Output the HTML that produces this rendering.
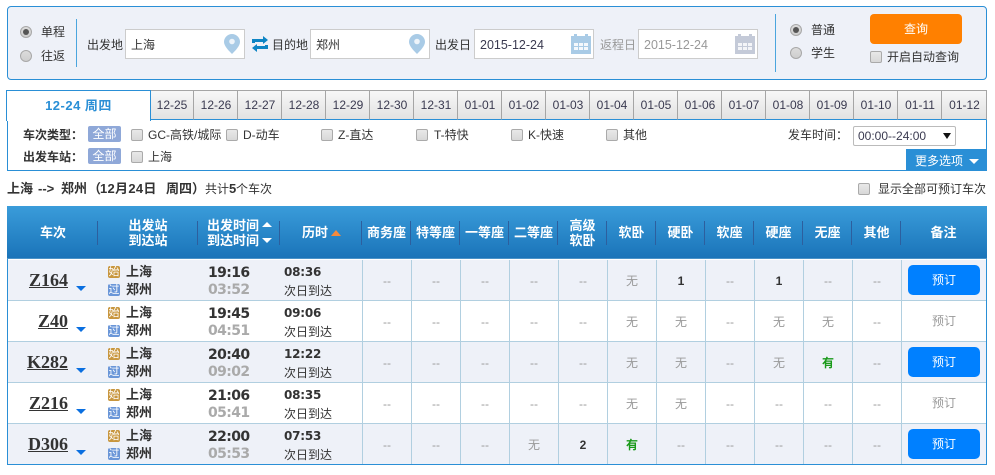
<!DOCTYPE html>
<html lang="zh"><head><meta charset="utf-8"><title>车票查询</title>
<style>
*{box-sizing:border-box}
html,body{margin:0;padding:0;background:#fff}
body{width:995px;height:475px;overflow:hidden;position:relative;font:12px/16px "Liberation Sans","WenQuanYi Zen Hei","Noto Sans CJK SC",sans-serif;color:#333}
.a{position:absolute;white-space:nowrap}
.rd{position:absolute;width:12px;height:12px;border-radius:50%;border:1px solid #a8a8a8;background:linear-gradient(#dcdcdc,#cecece)}
.rd.on:after{content:"";position:absolute;left:2px;top:2px;width:6px;height:6px;border-radius:50%;background:#555}
.cb{position:absolute;width:12px;height:12px;border-radius:2px;border:1px solid #aaa;background:linear-gradient(#e8e8e8,#d8d8d8)}
.inp{position:absolute;height:30px;width:120px;top:29px;background:#fff;border:1px solid #ccc;line-height:30px;padding-left:5px;font-size:12px}
.tab{position:absolute;top:90px;height:30px;width:44px;padding-left:1px;text-align:center;line-height:29px;background:linear-gradient(#f7f7f7,#e2e2e2);border-top:1px solid #a5a5a5;border-right:1px solid #a5a5a5;border-bottom:1px solid #2a8fd6;color:#3a3a50}
.bd{position:absolute;width:33px;height:16px;background:#8fa8d8;color:#fff;text-align:center;line-height:16px;border-radius:2px;left:88px;font-size:12px}
.th{position:absolute;top:206px;height:53px;color:#fff;font-weight:bold;text-align:center;line-height:15px;display:flex;align-items:center;justify-content:center;font-size:13px}
.sp{position:absolute;top:221px;width:1px;height:24px;background:#2d5f9e}
.row{position:absolute;left:8px;width:978px;height:41px;border-bottom:1px solid #b1cfe0}
.row.g{background:#eef1f8}
.no{position:absolute;right:918px;top:10px;font:bold 18px/20px "Liberation Serif",serif;text-decoration:underline;color:#333}
.ar{position:absolute;left:68px;top:26px;width:0;height:0;border:5px solid transparent;border-top:5px solid #0a6fe0;border-bottom:0}
.ic{position:absolute;left:100px;width:12px;height:12px;border-radius:2px;color:#fff;font-size:11px;line-height:12px;text-align:center}
.st{position:absolute;left:118px;font-weight:bold;font-size:13px;line-height:16px;color:#333}
.t1,.t2{position:absolute;left:200px;font:bold 14px/18px "DejaVu Sans","Liberation Sans",sans-serif;letter-spacing:-.6px}
.t1{top:4px;color:#333}.t2{top:21px;color:#aaa}
.d{position:absolute;left:276px;top:4px;font:bold 12px/16px "DejaVu Sans",sans-serif;letter-spacing:-.2px}
.n{position:absolute;left:276px;top:23px;font-size:12px;line-height:16px}
.c{position:absolute;top:0;width:49px;height:40px;border-left:1px solid #b1cfe0;text-align:center;line-height:42px;color:#999}
.c.b{color:#333;font-weight:bold}.c.y{color:#1a9a1a;font-weight:bold}
.btn{position:absolute;left:900px;top:5px;width:72px;height:30px;background:#0080ff;color:#fff;border-radius:5px;text-align:center;line-height:30px;font-size:12px}
.btn.off{background:none;color:#999}
.end{position:absolute;left:893px;top:0;height:40px;border-left:1px solid #b1cfe0}
</style></head><body>

<div class="a" style="left:7px;top:6px;width:980px;height:74px;background:#eef1f8;border:1px solid #2a8fd6;border-radius:4px"></div>
<span class="rd on" style="left:20px;top:26px"></span><span class="a" style="left:41px;top:24px">单程</span>
<span class="rd" style="left:20px;top:50px"></span><span class="a" style="left:41px;top:48px">往返</span>
<div class="a" style="left:76px;top:19px;width:1px;height:48px;background:#4aa5de"></div>
<span class="a" style="left:87px;top:37px">出发地</span>
<div class="inp" style="left:125px">上海</div>
<svg class="a" style="left:223px;top:34px" width="18" height="20" viewBox="0 0 18 20"><path d="M9 0a8 8 0 0 1 8 8c0 4-5 9-8 12C6 17 1 12 1 8a8 8 0 0 1 8-8z" fill="#a9cbe6"/><circle cx="9" cy="7.500" r="2.800" fill="#eef4fa"/></svg>
<svg class="a" style="left:252px;top:36px" width="16" height="16" viewBox="0 0 16 16"><path d="M0 7V3h11V0l5 4-5 4V6H3v1zM16 9v4H5v3l-5-4 5-4v2h8V9z" fill="#0d84c4"/></svg>
<span class="a" style="left:272px;top:37px">目的地</span>
<div class="inp" style="left:310px">郑州</div>
<svg class="a" style="left:408px;top:34px" width="18" height="20" viewBox="0 0 18 20"><path d="M9 0a8 8 0 0 1 8 8c0 4-5 9-8 12C6 17 1 12 1 8a8 8 0 0 1 8-8z" fill="#a9cbe6"/><circle cx="9" cy="7.500" r="2.800" fill="#eef4fa"/></svg>
<span class="a" style="left:435px;top:37px">出发日</span>
<div class="inp" style="left:474px;font-size:12.500px;color:#3a3a50">2015-12-24</div>
<svg class="a" style="left:571px;top:34px" width="20" height="20" viewBox="0 0 20 20"><path d="M0 2h3V0h3v2h8V0h3v2h3v18H0z" fill="#a9cbe6"/><path d="M3 9h4v3H3zM8 9h4v3H8zM13 9h4v3h-4zM3 13h4v3H3zM8 13h4v3H8zM13 13h4v3h-4z" fill="#f4f8fc"/></svg>
<span class="a" style="left:600px;top:37px;color:#999">返程日</span>
<div class="inp" style="left:638px;font-size:12.500px;color:#999">2015-12-24</div>
<svg class="a" style="left:735px;top:34px" width="20" height="20" viewBox="0 0 20 20"><path d="M0 2h3V0h3v2h8V0h3v2h3v18H0z" fill="#c4cad8"/><path d="M3 9h4v3H3zM8 9h4v3H8zM13 9h4v3h-4zM3 13h4v3H3zM8 13h4v3H8zM13 13h4v3h-4z" fill="#f4f5f8"/></svg>
<div class="a" style="left:775px;top:14px;width:1px;height:58px;background:#4aa5de"></div>
<span class="rd on" style="left:790px;top:24px"></span><span class="a" style="left:811px;top:22px">普通</span>
<span class="rd" style="left:790px;top:47px"></span><span class="a" style="left:811px;top:45px">学生</span>
<div class="a" style="left:870px;top:14px;width:92px;height:30px;background:#ff8000;border-radius:4px;color:#fff;text-align:center;line-height:30px">查询</div>
<span class="cb" style="left:870px;top:51px"></span><span class="a" style="left:887px;top:49px">开启自动查询</span>

<div class="a" style="left:6px;top:90px;width:145px;height:31px;background:#fff;border:1px solid #2a8fd6;border-bottom:0;text-align:center;line-height:29px;font-weight:bold;font-size:13px;letter-spacing:.5px;color:#2a8fd6;z-index:2">12-24 周四</div>
<div class="tab" style="left:150px">12-25</div><div class="tab" style="left:194px">12-26</div><div class="tab" style="left:238px">12-27</div><div class="tab" style="left:282px">12-28</div><div class="tab" style="left:326px">12-29</div><div class="tab" style="left:370px">12-30</div><div class="tab" style="left:414px">12-31</div><div class="tab" style="left:458px">01-01</div><div class="tab" style="left:502px">01-02</div><div class="tab" style="left:546px">01-03</div><div class="tab" style="left:590px">01-04</div><div class="tab" style="left:634px">01-05</div><div class="tab" style="left:678px">01-06</div><div class="tab" style="left:722px">01-07</div><div class="tab" style="left:766px">01-08</div><div class="tab" style="left:810px">01-09</div><div class="tab" style="left:854px">01-10</div><div class="tab" style="left:898px">01-11</div><div class="tab" style="left:942px;width:45px">01-12</div>

<div class="a" style="left:7px;top:120px;width:980px;height:51px;border:1px solid #2a8fd6;border-top:0"></div>
<span class="a" style="left:23px;top:127px;font-weight:bold">车次类型：</span><span class="bd" style="top:126px">全部</span>
<span class="cb" style="left:131px;top:129px"></span><span class="a" style="left:148px;top:127px">GC-高铁/城际</span>
<span class="cb" style="left:226px;top:129px"></span><span class="a" style="left:243px;top:127px">D-动车</span>
<span class="cb" style="left:321px;top:129px"></span><span class="a" style="left:338px;top:127px">Z-直达</span>
<span class="cb" style="left:416px;top:129px"></span><span class="a" style="left:434px;top:127px">T-特快</span>
<span class="cb" style="left:511px;top:129px"></span><span class="a" style="left:528px;top:127px">K-快速</span>
<span class="cb" style="left:606px;top:129px"></span><span class="a" style="left:623px;top:127px">其他</span>
<span class="a" style="left:788px;top:127px">发车时间：</span>
<div class="a" style="left:853px;top:126px;width:103px;height:20px;border:1px solid #bbb;border-radius:2px;line-height:18px;padding-left:4px;background:#fff;color:#3a3a50">00:00--24:00<span style="position:absolute;left:89px;top:6px;width:0;height:0;border:4px solid transparent;border-top:6px solid #111;border-bottom:0"></span></div>
<div class="a" style="left:906px;top:149px;width:81px;height:22px;background:#2a8fd6;color:#fff;line-height:25px;padding-left:9px">更多选项<span style="position:absolute;left:63px;top:10px;width:0;height:0;border:5px solid transparent;border-top:5px solid #fff;border-bottom:0"></span></div>
<span class="a" style="left:23px;top:149px;font-weight:bold">出发车站：</span><span class="bd" style="top:148px">全部</span>
<span class="cb" style="left:131px;top:151px"></span><span class="a" style="left:148px;top:149px">上海</span>

<b class="a" style="left:7px;top:181px;font-size:13px">上海</b><b class="a" style="left:38px;top:181px;font-size:13px">--&gt;</b><b class="a" style="left:61px;top:181px;font-size:13px">郑州</b><b class="a" style="left:88px;top:181px;font-size:13px">（</b><b class="a" style="left:100px;top:181px;font-size:13px;letter-spacing:.3px">12月24日</b><b class="a" style="left:166px;top:181px;font-size:13px">周四</b><b class="a" style="left:192px;top:181px;font-size:13px">）</b>
<span class="a" style="left:205px;top:181px">共计</span><b class="a" style="left:229px;top:181px;font-size:13px">5</b><span class="a" style="left:236px;top:181px">个车次</span>
<span class="cb" style="left:858px;top:183px"></span><span class="a" style="left:878px;top:181px">显示全部可预订车次</span>

<div class="a" style="left:7px;top:206px;width:980px;height:259px;border:1px solid #2a8fd6;border-top:0"></div>
<div class="a" style="left:7px;top:206px;width:980px;height:53px;background:linear-gradient(#3a9cda,#1a74b9);border-bottom:1px solid #4a93c8"></div>
<div class="th" style="left:8px;width:90px">车次</div>
<div class="th" style="left:98px;width:100px">出发站<br>到达站</div>
<div class="th" style="left:198px;width:70px">出发时间<br>到达时间</div>
<span class="a" style="left:262px;top:222px;border:5px solid transparent;border-bottom:5px solid #fff;border-top:0;width:0;height:0"></span>
<span class="a" style="left:262px;top:238px;border:5px solid transparent;border-top:5px solid #fff;border-bottom:0;width:0;height:0"></span>
<div class="th" style="left:290px;width:50px">历时</div>
<span class="a" style="left:331px;top:230px;border:5px solid transparent;border-bottom:6px solid #f58a3c;border-top:0;width:0;height:0"></span>
<div class="th" style="left:362px;width:49px">商务座</div><div class="th" style="left:411px;width:49px">特等座</div><div class="th" style="left:460px;width:49px">一等座</div><div class="th" style="left:509px;width:49px">二等座</div><div class="th" style="left:558px;width:49px">高级<br>软卧</div><div class="th" style="left:607px;width:49px">软卧</div><div class="th" style="left:656px;width:49px">硬卧</div><div class="th" style="left:705px;width:49px">软座</div><div class="th" style="left:754px;width:49px">硬座</div><div class="th" style="left:803px;width:49px">无座</div><div class="th" style="left:852px;width:49px">其他</div><div class="th" style="left:901px;width:85px">备注</div>
<i class="sp" style="left:97px"></i><i class="sp" style="left:197px"></i><i class="sp" style="left:279px"></i><i class="sp" style="left:361px"></i><i class="sp" style="left:410px"></i><i class="sp" style="left:459px"></i><i class="sp" style="left:508px"></i><i class="sp" style="left:557px"></i><i class="sp" style="left:606px"></i><i class="sp" style="left:655px"></i><i class="sp" style="left:704px"></i><i class="sp" style="left:753px"></i><i class="sp" style="left:802px"></i><i class="sp" style="left:851px"></i><i class="sp" style="left:900px"></i>

<div class="a row g" style="top:260px"><span class="no">Z164</span><i class="ar"></i><span class="ic" style="top:6px;background:#c8963e">始</span><span class="st" style="top:4px">上海</span><span class="ic" style="top:24px;background:#6a96d8">过</span><span class="st" style="top:22px">郑州</span><span class="t1">19:16</span><span class="t2">03:52</span><span class="d">08:36</span><span class="n">次日到达</span>
<span class="c" style="left:354px">--</span><span class="c" style="left:403px">--</span><span class="c" style="left:452px">--</span><span class="c" style="left:501px">--</span><span class="c" style="left:550px">--</span><span class="c" style="left:599px">无</span><span class="c b" style="left:648px">1</span><span class="c" style="left:697px">--</span><span class="c b" style="left:746px">1</span><span class="c" style="left:795px">--</span><span class="c" style="left:844px">--</span><i class="end"></i><span class="btn">预订</span></div>

<div class="a row" style="top:301px"><span class="no">Z40</span><i class="ar"></i><span class="ic" style="top:6px;background:#c8963e">始</span><span class="st" style="top:4px">上海</span><span class="ic" style="top:24px;background:#6a96d8">过</span><span class="st" style="top:22px">郑州</span><span class="t1">19:45</span><span class="t2">04:51</span><span class="d">09:06</span><span class="n">次日到达</span>
<span class="c" style="left:354px">--</span><span class="c" style="left:403px">--</span><span class="c" style="left:452px">--</span><span class="c" style="left:501px">--</span><span class="c" style="left:550px">--</span><span class="c" style="left:599px">无</span><span class="c" style="left:648px">无</span><span class="c" style="left:697px">--</span><span class="c" style="left:746px">无</span><span class="c" style="left:795px">无</span><span class="c" style="left:844px">--</span><i class="end"></i><span class="btn off">预订</span></div>

<div class="a row g" style="top:342px"><span class="no">K282</span><i class="ar"></i><span class="ic" style="top:6px;background:#c8963e">始</span><span class="st" style="top:4px">上海</span><span class="ic" style="top:24px;background:#6a96d8">过</span><span class="st" style="top:22px">郑州</span><span class="t1">20:40</span><span class="t2">09:02</span><span class="d">12:22</span><span class="n">次日到达</span>
<span class="c" style="left:354px">--</span><span class="c" style="left:403px">--</span><span class="c" style="left:452px">--</span><span class="c" style="left:501px">--</span><span class="c" style="left:550px">--</span><span class="c" style="left:599px">无</span><span class="c" style="left:648px">无</span><span class="c" style="left:697px">--</span><span class="c" style="left:746px">无</span><span class="c y" style="left:795px">有</span><span class="c" style="left:844px">--</span><i class="end"></i><span class="btn">预订</span></div>

<div class="a row" style="top:383px"><span class="no">Z216</span><i class="ar"></i><span class="ic" style="top:6px;background:#c8963e">始</span><span class="st" style="top:4px">上海</span><span class="ic" style="top:24px;background:#6a96d8">过</span><span class="st" style="top:22px">郑州</span><span class="t1">21:06</span><span class="t2">05:41</span><span class="d">08:35</span><span class="n">次日到达</span>
<span class="c" style="left:354px">--</span><span class="c" style="left:403px">--</span><span class="c" style="left:452px">--</span><span class="c" style="left:501px">--</span><span class="c" style="left:550px">--</span><span class="c" style="left:599px">无</span><span class="c" style="left:648px">无</span><span class="c" style="left:697px">--</span><span class="c" style="left:746px">--</span><span class="c" style="left:795px">--</span><span class="c" style="left:844px">--</span><i class="end"></i><span class="btn off">预订</span></div>

<div class="a row g" style="top:424px;border-bottom:1px solid #2a8fd6"><span class="no">D306</span><i class="ar"></i><span class="ic" style="top:6px;background:#c8963e">始</span><span class="st" style="top:4px">上海</span><span class="ic" style="top:24px;background:#6a96d8">过</span><span class="st" style="top:22px">郑州</span><span class="t1">22:00</span><span class="t2">05:53</span><span class="d">07:53</span><span class="n">次日到达</span>
<span class="c" style="left:354px">--</span><span class="c" style="left:403px">--</span><span class="c" style="left:452px">--</span><span class="c" style="left:501px">无</span><span class="c b" style="left:550px">2</span><span class="c y" style="left:599px">有</span><span class="c" style="left:648px">--</span><span class="c" style="left:697px">--</span><span class="c" style="left:746px">--</span><span class="c" style="left:795px">--</span><span class="c" style="left:844px">--</span><i class="end"></i><span class="btn">预订</span></div>

</body></html>
